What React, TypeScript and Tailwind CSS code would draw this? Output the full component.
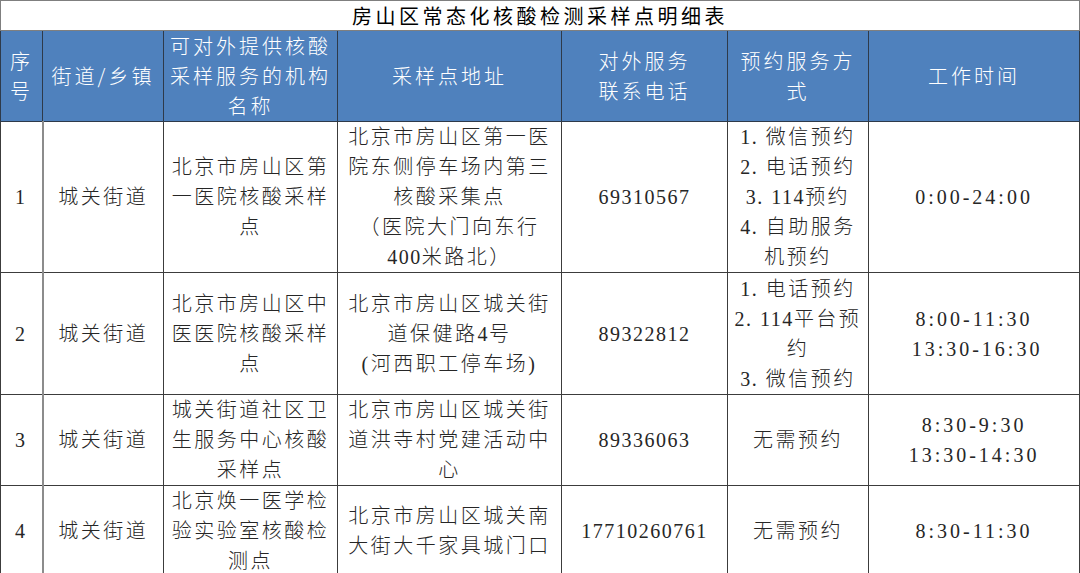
import React from "react";

const N = ({ children }: { children: React.ReactNode }) => (
  <span className="tracking-[1.5px]">{children}</span>
);
const T = ({ children }: { children: React.ReactNode }) => (
  <span className="tracking-[3px]">{children}</span>
);

type Row = {
  no: string;
  street: string;
  org: React.ReactNode[];
  addr: React.ReactNode[];
  phone: string;
  way: React.ReactNode[];
  time: React.ReactNode[];
  h: string;
};

const rows: Row[] = [
  {
    no: "1",
    street: "城关街道",
    org: ["北京市房山区第", "一医院核酸采样", "点"],
    addr: [
      "北京市房山区第一医",
      "院东侧停车场内第三",
      "核酸采集点",
      "（医院大门向东行",
      <><N>400</N>米路北）</>,
    ],
    phone: "69310567",
    way: [
      <><N>1.</N> 微信预约</>,
      <><N>2.</N> 电话预约</>,
      <><N>3.</N> <N>114</N>预约</>,
      <><N>4.</N> 自助服务</>,
      "机预约",
    ],
    time: [<T>0:00-24:00</T>],
    h: "h-[150px]",
  },
  {
    no: "2",
    street: "城关街道",
    org: ["北京市房山区中", "医医院核酸采样", "点"],
    addr: ["北京市房山区城关街", <>道保健路<N>4</N>号</>, "(河西职工停车场)"],
    phone: "89322812",
    way: [
      <><N>1.</N> 电话预约</>,
      <><N>2.</N> <N>114</N>平台预</>,
      "约",
      <><N>3.</N> 微信预约</>,
    ],
    time: [<T>8:00-11:30</T>, <span className="pl-[6px]"><T>13:30-16:30</T></span>],
    h: "h-[122px]",
  },
  {
    no: "3",
    street: "城关街道",
    org: ["城关街道社区卫", "生服务中心核酸", "采样点"],
    addr: ["北京市房山区城关街", "道洪寺村党建活动中", "心"],
    phone: "89336063",
    way: ["无需预约"],
    time: [<T>8:30-9:30</T>, <T>13:30-14:30</T>],
    h: "h-[89px]",
  },
  {
    no: "4",
    street: "城关街道",
    org: ["北京焕一医学检", "验实验室核酸检", "测点"],
    addr: ["北京市房山区城关南", "大街大千家具城门口"],
    phone: "17710260761",
    way: ["无需预约"],
    time: [<T>8:30-11:30</T>],
    h: "h-[90px]",
  },
];

const Lines = ({ lines }: { lines: React.ReactNode[] }) => (
  <div className="flex flex-col items-center">
    {lines.map((l, i) => (
      <div key={i} className="whitespace-nowrap leading-[30px]">
        {l}
      </div>
    ))}
  </div>
);

const th =
  "border border-[#2e3a4a] bg-[#4f81bd] text-white text-center align-middle p-0 font-light";
const td = "border border-[#3c3c3c] text-center align-middle p-0";

export default function App() {
  return (
    <div className="w-[1080px] h-[573px] overflow-hidden bg-white">
      <table
        className="table-fixed border-collapse w-[1079px] text-[20px] tracking-[2.5px] text-[#262626] font-light"
        style={{ fontFamily: '"Liberation Serif", "Noto Sans CJK SC", serif' }}
      >
        <colgroup>
          <col className="w-[42px]" />
          <col className="w-[121px]" />
          <col className="w-[174px]" />
          <col className="w-[224px]" />
          <col className="w-[166px]" />
          <col className="w-[141px]" />
          <col className="w-[211px]" />
        </colgroup>
        <thead>
          <tr className="h-[30px]">
            <th
              colSpan={7}
              className="border border-[#7f7f7f] text-center align-middle p-0 font-normal text-[20px] tracking-[3.5px] text-black leading-[28px]"
              style={{ fontFamily: '"Noto Sans CJK SC", sans-serif' }}
            >
              房山区常态化核酸检测采样点明细表
            </th>
          </tr>
          <tr
            className="h-[91px] tracking-[3px]"
            style={{ fontFamily: '"Noto Sans CJK SC", sans-serif' }}
          >
            <th className={th}>
              <div className="leading-[30px]">序</div>
              <div className="leading-[30px]">号</div>
            </th>
            <th className={th}>
              <span className="whitespace-nowrap">街道/乡镇</span>
            </th>
            <th className={th}>
              <Lines lines={["可对外提供核酸", "采样服务的机构", "名称"]} />
            </th>
            <th className={th}>采样点地址</th>
            <th className={th}>
              <Lines lines={["对外服务", "联系电话"]} />
            </th>
            <th className={th}>
              <Lines lines={["预约服务方", "式"]} />
            </th>
            <th className={th}>工作时间</th>
          </tr>
        </thead>
        <tbody>
          {rows.map((r) => (
            <tr key={r.no} className={r.h}>
              <td className={`${td} border-r-2 border-r-[#8c8c8c]`}>{r.no}</td>
              <td className={td}>{r.street}</td>
              <td className={td}>
                <Lines lines={r.org} />
              </td>
              <td className={td}>
                <Lines lines={r.addr} />
              </td>
              <td className={td}>
                <N>{r.phone}</N>
              </td>
              <td className={td}>
                <Lines lines={r.way} />
              </td>
              <td className={td}>
                <Lines lines={r.time} />
              </td>
            </tr>
          ))}
        </tbody>
      </table>
    </div>
  );
}
